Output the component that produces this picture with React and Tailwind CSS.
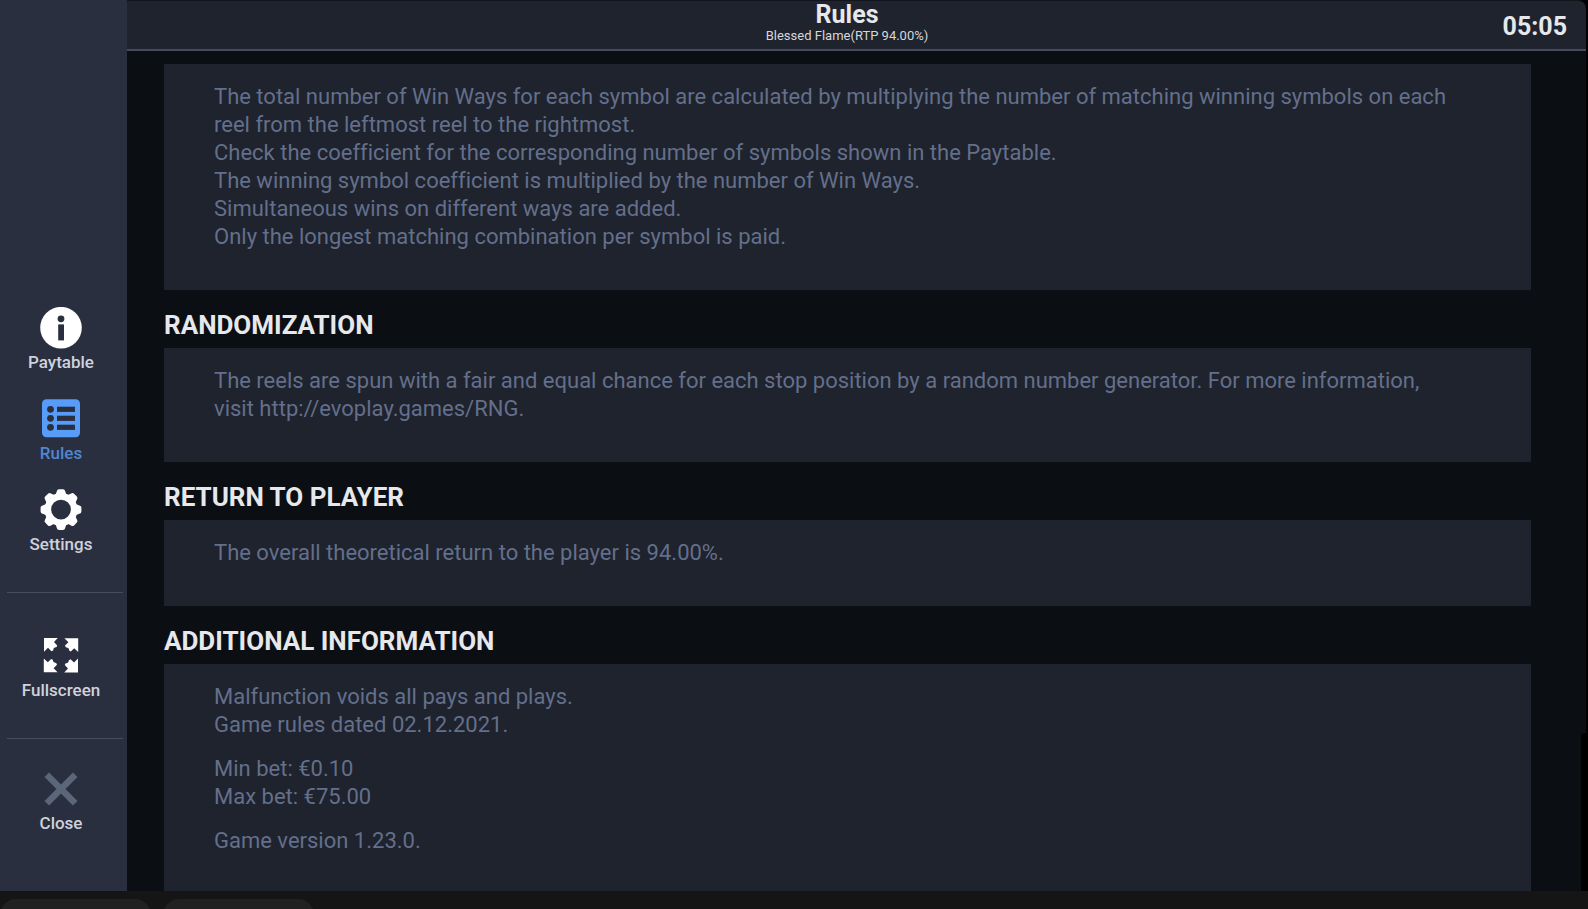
const sections = [
  {
    id: 'win-ways',
    groups: [
      [
        'The total number of Win Ways for each symbol are calculated by multiplying the number of matching winning symbols on each reel from the leftmost reel to the rightmost.',
        'Check the coefficient for the corresponding number of symbols shown in the Paytable.',
        'The winning symbol coefficient is multiplied by the number of Win Ways.',
        'Simultaneous wins on different ways are added.',
        'Only the longest matching combination per symbol is paid.',
      ],
    ],
  },
  {
    id: 'randomization',
    title: 'RANDOMIZATION',
    groups: [
      [
        'The reels are spun with a fair and equal chance for each stop position by a random number generator. For more information, visit http://evoplay.games/RNG.',
      ],
    ],
  },
  {
    id: 'rtp',
    title: 'RETURN TO PLAYER',
    groups: [['The overall theoretical return to the player is 94.00%.']],
  },
  {
    id: 'additional',
    title: 'ADDITIONAL INFORMATION',
    groups: [
      ['Malfunction voids all pays and plays.', 'Game rules dated 02.12.2021.'],
      ['Min bet: €0.10', 'Max bet: €75.00'],
      ['Game version 1.23.0.'],
    ],
  },
];

const InfoIcon = () => (
  <svg viewBox="0 0 42 42" className="size-[42px]" aria-hidden="true">
    <circle cx="21" cy="20.7" r="20.8" fill="#fff" />
    <circle cx="21" cy="11.8" r="3.4" fill="#2a2f3e" />
    <rect x="18.2" y="17.4" width="5.8" height="16" fill="#2a2f3e" />
  </svg>
);

const RulesIcon = () => (
  <svg viewBox="0 0 42 42" className="size-[42px]" aria-hidden="true">
    <rect x="2" y="1.3" width="38" height="38" rx="4.5" fill="#579cf8" />
    {[11.3, 20.3, 29.3].map((y) => (
      <g key={y} fill="#2a2f3e">
        <circle cx="10.5" cy={y} r="3.4" />
        <rect x="17" y={y - 2.6} width="18" height="5.2" />
      </g>
    ))}
  </svg>
);

const GearIcon = () => (
  <svg viewBox="0 0 42 42" className="size-[42px]" aria-hidden="true">
    <g fill="#fff">
      {[0, 45, 90, 135, 180, 225, 270, 315].map((angle) => (
        <path
          key={angle}
          d="M13.5 9 Q16.2 5.6 16.8 2.2 Q17.2 0.2 19 0.2 H23 Q24.8 0.2 25.2 2.2 Q25.8 5.6 28.5 9 Z"
          transform={`rotate(${angle} 21 20.6)`}
        />
      ))}
    </g>
    <circle cx="21" cy="20.6" r="13.2" fill="none" stroke="#fff" strokeWidth="6.6" />
  </svg>
);

const FullscreenIcon = () => (
  <svg viewBox="0 0 42 42" className="size-[42px]" aria-hidden="true">
    {[0, 90, 180, 270].map((angle) => (
      <path
        key={angle}
        fill="#fff"
        d="M4 3 H17.8 L14 7 L17.2 10.4 Q17 12.6 14.6 12.4 L13.6 13.4 Q13.8 15.8 11.4 16.2 L8 12.8 L4 16.8 Z"
        transform={`rotate(${angle} 21 20.2)`}
      />
    ))}
  </svg>
);

const CloseIcon = () => (
  <svg viewBox="0 0 42 42" className="size-[42px]" aria-hidden="true">
    <path d="M6.8 6.8 L35.2 35.2 M35.2 6.8 L6.8 35.2" stroke="#5b6778" strokeWidth="6.4" fill="none" />
  </svg>
);

const MenuButton = ({ icon, label, active }) => (
  <button type="button" aria-current={active ? 'page' : undefined} className="flex flex-col items-center gap-[3px]">
    {icon}
    <span className={active ? 'text-[17px] leading-5 font-medium text-[#4f87d0]' : 'text-[17px] leading-5 font-medium text-[#cfd2dc]'}>
      {label}
    </span>
  </button>
);

const Sidebar = () => (
  <nav className="flex w-[127px] shrink-0 flex-col justify-end bg-[#2a2f3f] pr-1 pl-[7px]">
    <div className="flex flex-col items-center gap-[26px] pr-2 pb-[38px]">
      <MenuButton icon={<InfoIcon />} label="Paytable" />
      <MenuButton icon={<RulesIcon />} label="Rules" active />
      <MenuButton icon={<GearIcon />} label="Settings" />
    </div>
    <div className="flex flex-col items-center border-t border-[#474d5f] pt-[42px] pr-2 pb-[38px]">
      <MenuButton icon={<FullscreenIcon />} label="Fullscreen" />
    </div>
    <div className="flex flex-col items-center border-t border-[#474d5f] pt-[29px] pr-2 pb-[58px]">
      <MenuButton icon={<CloseIcon />} label="Close" />
    </div>
  </nav>
);

const RuleSection = ({ title, groups }) => (
  <section>
    {title && <h2 className="pt-3 text-[26px] leading-[46px] font-bold text-[#e6e8ec]">{title}</h2>}
    <div className="flex flex-col gap-4 bg-[#1e232d] pt-[19px] pr-[70px] pb-[39px] pl-[50px] text-[22px] leading-7 text-[#646f8b] [font-variant-ligatures:none]">
      {groups.map((lines) => (
        <div key={lines[0]}>
          {lines.map((line) => (
            <p key={line}>{line}</p>
          ))}
        </div>
      ))}
    </div>
  </section>
);

export default function App() {
  return (
    <div className="flex h-screen flex-col overflow-hidden bg-[#151515] font-[Roboto,sans-serif]">
      <div className="flex min-h-0 flex-1 bg-black">
        <Sidebar />
        <div className="relative flex min-w-0 flex-1 flex-col">
          <header className="mr-[2px] grid shrink-0 grid-cols-[1fr_auto_1fr] items-center rounded-tr-lg border-t border-b-2 border-t-[#11141a] border-b-[#474a5b] bg-[#1f232d] pr-[19px]">
            <div />
            <div className="flex flex-col items-center pt-[2px] pb-1">
              <h1 className="text-[25px] leading-6 font-bold text-[#e6e8ec]">Rules</h1>
              <p className="text-[13px] leading-[18px] text-[#d5d7dc]">Blessed Flame(RTP 94.00%)</p>
            </div>
            <time className="justify-self-end pt-1 text-[25px] leading-8 font-bold text-[#e6e8ec]">05:05</time>
          </header>
          <main className="mr-[2px] min-h-0 flex-1 overflow-hidden bg-[#0b0e12] pt-[13px] pr-[55px] pl-[37px]">
            {sections.map((section) => (
              <RuleSection key={section.id} title={section.title} groups={section.groups} />
            ))}
          </main>
          <div className="absolute right-0 bottom-0 h-[158px] w-[7px] rounded-tl bg-black" />
        </div>
      </div>
      <div className="flex h-[18px] shrink-0 gap-3 overflow-hidden pt-2">
        <div className="h-10 w-[151px] rounded-t-2xl bg-[#212121]" />
        <div className="h-10 w-[151px] rounded-t-2xl bg-[#212121]" />
      </div>
    </div>
  );
}
